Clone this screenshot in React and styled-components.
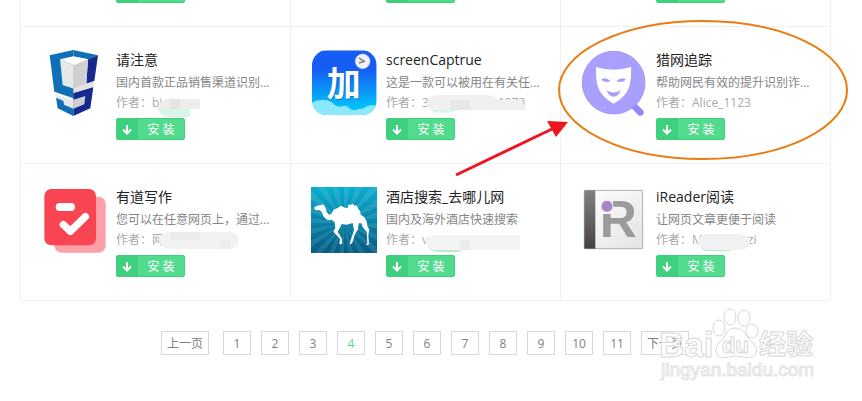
import styled, { createGlobalStyle } from 'styled-components';

const GlobalStyle = createGlobalStyle`
  * {
    box-sizing: border-box;
  }
  body {
    margin: 0;
    background: #fff;
    font-family: 'Open Sans', 'Noto Sans CJK SC', sans-serif;
    font-size: 12px;
  }
`;

const Page = styled.div`
  position: relative;
  overflow: hidden;
  padding: 0 31px 46px 20px;
`;

const Grid = styled.ul`
  display: grid;
  grid-template-columns: repeat(3, 1fr);
  margin: 0;
  padding: 0;
  list-style: none;
  border-left: 1px solid #f0f0f0;
`;

const Card = styled.li`
  display: flex;
  gap: 9px;
  min-width: 0;
  padding: 23px 20px;
  border-right: 1px solid #f0f0f0;
  border-bottom: 1px solid #f0f0f0;
`;

const CardTail = styled(Card)`
  height: 27px;
  padding: 0 20px 23px 95px;
  align-items: flex-end;
`;

const Icon = styled.svg`
  flex: none;
  width: 66px;
  height: 66px;
`;

const Info = styled.div`
  min-width: 0;
`;

const Title = styled.h3`
  margin: 0 0 3px;
  font-size: 14px;
  font-weight: 400;
  line-height: 20px;
  color: #222;
`;

const Line = styled.p`
  position: relative;
  display: flex;
  margin: 0;
  line-height: 20px;
  white-space: nowrap;
  color: ${({ $light }) => ($light ? '#aaa' : '#858585')};
`;

const HiddenPart = styled.span`
  width: ${({ $width }) => $width}px;
`;

const Mask = styled.svg`
  position: absolute;
  left: 0;
  top: -1px;
  width: 140px;
  height: 26px;
`;

const InstallBtn = styled.button`
  display: flex;
  align-items: center;
  flex: none;
  width: 69px;
  height: 22px;
  margin: ${({ $top }) => $top || 0}px 0 0;
  padding: 0;
  border: 1px solid #3fd07f;
  border-radius: 2px;
  background: #52da8d;
  color: #fff;
  font: inherit;
  line-height: 20px;
  cursor: pointer;
`;

const BtnIcon = styled.svg`
  width: 21px;
  height: 20px;
  background: #3fd07f;
`;

const BtnLabel = styled.span`
  flex: 1;
  padding-top: 1px;
  text-align: center;
`;

const Pager = styled.nav`
  display: flex;
  justify-content: center;
  gap: 10px;
  margin-top: 30px;
  padding-right: 1px;
`;

const PageLink = styled.a`
  width: ${({ $wide }) => ($wide ? 48 : 28)}px;
  height: 24px;
  border: 1px solid #d9d9d9;
  line-height: 23px;
  text-align: center;
  text-decoration: none;
  color: ${({ $current }) => ($current ? '#52da8d' : '#808080')};
`;

const PrevLink = styled(PageLink)`
  margin-right: 4px;
`;

const Overlay = styled.svg`
  position: absolute;
  left: ${({ $x }) => $x}px;
  top: ${({ $y }) => $y}px;
  pointer-events: none;
`;

const NoticeIcon = () => (
  <Icon viewBox="123 150 198 198">
    <path d="M220 150 149 166 163 275 220 295Z" fill="#0f70b8" />
    <path d="M220 150 294 166 264 178 220 170Z" fill="#0f70b8" />
    <path d="M294 166 283 243 259 251 264 178Z" fill="#16298c" />
    <path d="M220 279 280 261 271 325 220 348Z" fill="#16298c" />
    <path d="M168 293 190 302 220 325V348L173 325Z" fill="#0f70b8" />
    <path d="M180 178 220 195V266L188 256Z" fill="#e6e8e8" />
    <path d="M264 178 220 195V266L259 252Z" fill="#cfcfd2" />
    <path d="M220 266 283 243 280 261 220 279Z" fill="#e3e3e5" />
    <path d="M188 256 220 266V279L188 270Z" fill="#0f70b8" />
    <path d="M220 169 264 178 220 195 180 178Z" fill="#fff" />
    <path d="M167 284 220 299V326L192 314 190 300 169 292Z" fill="#e6e8e8" />
    <path d="M220 299 256 288 253 313 220 326Z" fill="#cfcfd2" />
  </Icon>
);

const CaptureIcon = () => (
  <Icon viewBox="63 150 198 198">
    <defs>
      <linearGradient id="sky" x1="0" y1="0" x2="0" y2="1">
        <stop offset="0.3" stopColor="#155df4" />
        <stop offset="0.85" stopColor="#04bdfc" />
      </linearGradient>
      <clipPath id="tile">
        <rect x="66" y="151" width="194" height="194" rx="44" />
      </clipPath>
    </defs>
    <g clipPath="url(#tile)">
      <rect x="66" y="151" width="194" height="194" fill="url(#sky)" />
      <path
        d="M66 308Q80 298 100 300Q122 300 133 314Q146 323 156 319Q170 314 181 327Q192 334 204 327Q218 329 228 320Q242 313 262 318V350H66Z"
        fill="#8ce9fd"
      />
    </g>
    <text x="113" y="290" fontSize="102" fontWeight="700" fontFamily="'Noto Sans CJK SC', sans-serif" fill="#064fa8" opacity="0.5">
      加
    </text>
    <text x="110" y="287" fontSize="102" fontWeight="700" fontFamily="'Noto Sans CJK SC', sans-serif" fill="#fff">
      加
    </text>
    <circle cx="218" cy="184" r="22" fill="#f0f1f4" stroke="#c8d4ec" strokeWidth="2" />
    <path d="M207 174 223 184 207 189" fill="none" stroke="#777" strokeWidth="4" />
  </Icon>
);

const MaskIcon = () => (
  <Icon viewBox="93 150 198 198">
    <path d="M252 318 271 337" stroke="#9388fb" strokeWidth="20" strokeLinecap="round" />
    <circle cx="191" cy="248" r="94" fill="#a9a0fe" stroke="#9f94f8" strokeWidth="3" />
    <path
      d="M138 201Q190 217 243 201Q245 238 237 262Q227 292 191 311Q155 292 144 262Q137 238 138 201Z"
      fill="#fff"
    />
    <path
      d="M153 239Q166 229 182 243Q166 250 153 239ZM199 243Q215 229 228 239Q215 250 199 243ZM170 271Q191 284 212 271Q206 290 191 290Q176 290 170 271Z"
      fill="#a9a0fe"
    />
  </Icon>
);

const WritingIcon = () => (
  <Icon viewBox="123 81 198 198">
    <rect x="163" y="110" width="154" height="168" rx="21" fill="#fda0a8" />
    <rect x="133" y="87" width="155" height="169" rx="21" fill="#f94551" />
    <path d="M179 141H213" stroke="#fff" strokeWidth="24" strokeLinecap="round" />
    <path
      d="M190 194 211 214 256 170"
      fill="none"
      stroke="#fff"
      strokeWidth="22"
      strokeLinecap="round"
      strokeLinejoin="round"
    />
  </Icon>
);

const rays = Array.from({ length: 20 }, (_, i) => {
  const point = (deg) => {
    const a = (deg * Math.PI) / 180;
    return `${162 + 200 * Math.cos(a)} ${190 + 200 * Math.sin(a)}`;
  };
  return `M162 190L${point(i * 18)}L${point(i * 18 + 9)}Z`;
}).join('');

const HotelIcon = () => (
  <Icon viewBox="63 81 198 198">
    <defs>
      <linearGradient id="sea" x1="0" y1="0" x2="0" y2="1">
        <stop offset="0" stopColor="#09aed0" />
        <stop offset="1" stopColor="#045b83" />
      </linearGradient>
    </defs>
    <rect x="63" y="81" width="198" height="198" fill="url(#sea)" />
    <path d={rays} fill="#fff" opacity="0.1" />
    <path
      d="M72 143 80 137 94 135 99 133 106 142 110 156 117 164 125 160 131 149 143 144 153 137 164 143 173 144 175 133 181 136 187 131 194 137 200 136 205 147 211 154 211 163 223 172 230 184 232 198 238 209 235 225 237 253 228 256 232 248 230 215 218 202 215 190 206 190 204 208 195 222 187 248 179 254 182 240 192 211 188 189 170 194 155 192 149 205 143 215 155 235 157 251 148 253 150 236 130 215 136 203 134 187 126 180 113 181 101 170 95 155 89 151 76 150Z"
      fill="#fff"
    />
  </Icon>
);

const ReaderIcon = () => (
  <Icon viewBox="63 81 198 198">
    <defs>
      <linearGradient id="spine" x1="0" y1="0" x2="0" y2="1">
        <stop offset="0" stopColor="#808184" />
        <stop offset="1" stopColor="#474244" />
      </linearGradient>
      <linearGradient id="cover" x1="0" y1="0" x2="1" y2="1">
        <stop offset="0" stopColor="#fff" />
        <stop offset="1" stopColor="#e2e3e4" />
      </linearGradient>
    </defs>
    <rect x="73" y="91" width="175" height="175" rx="3" fill="url(#cover)" stroke="#aeb0b2" strokeWidth="3" />
    <rect x="73" y="91" width="33" height="175" fill="url(#spine)" />
    <text x="119" y="231" fontSize="154" fontWeight="700" fontFamily="'Liberation Sans', sans-serif" fill="#9b9b9c">
      R
    </text>
    <rect x="124" y="120" width="35" height="42" fill="#fafafa" />
    <circle cx="141" cy="139" r="18" fill="#a986c8" stroke="#f4f1f7" strokeWidth="3" />
  </Icon>
);

const apps = [
  {
    icon: NoticeIcon,
    title: '请注意',
    desc: '国内首款正品销售渠道识别...',
    author: 'bi',
    hidden: 4,
    tail: 't',
    mask: [
      ['M42 15Q44 7 54 7H84V17H42Z', '#ededed'],
      ['M54 7H64V17H54Z', '#e4e4e5'],
      ['M42 17H74V25H54Q44 25 42 17Z', '#d9f5e5'],
    ],
  },
  {
    icon: CaptureIcon,
    title: 'screenCaptrue',
    desc: '这是一款可以被用在有关任...',
    author: '3',
    hidden: 69,
    tail: '1373',
    mask: [
      ['M42 15H74V18Q60 22 48 20Z', '#d5f4e2'],
      ['M40 13Q42 3 54 3H104L114 8H134L144 18H50Q42 18 40 13Z', '#f0f0f0'],
      ['M64 8H84V18H64Z', '#e8e8e9'],
    ],
  },
  {
    icon: MaskIcon,
    title: '猎网追踪',
    desc: '帮助网民有效的提升识别诈...',
    author: 'Alice_1123',
  },
  {
    icon: WritingIcon,
    title: '有道写作',
    desc: '您可以在任意网页上，通过...',
    author: '网',
    mask: [
      ['M43 11Q44 3 54 3H114Q123 5 123 11Q122 19 114 20H54Q45 19 43 11Z', '#f2f2f3'],
      ['M54 3H84V11H54Z', '#ebebec'],
      ['M104 11H114V20H104Z', '#ececed'],
    ],
  },
  {
    icon: HotelIcon,
    title: '酒店搜索_去哪儿网',
    desc: '国内及海外酒店快速搜索',
    author: 'v',
    mask: [
      ['M42 18H74V23H50Q44 22 42 18Z', '#b9edcf'],
      ['M39 12Q41 6 48 6H134V21H46Q40 18 39 12Z', '#f3f3f4'],
      ['M74 11H84V21H74Z', '#ebebed'],
    ],
  },
  {
    icon: ReaderIcon,
    title: 'iReader阅读',
    desc: '让网页文章更便于阅读',
    author: 'M',
    hidden: 45,
    tail: 'zi',
    mask: [
      ['M44 18H74V22H50Q46 21 44 18Z', '#b4edcc'],
      ['M41 12Q43 5 52 5H84Q94 7 94 14Q93 20 84 21H50Q43 19 41 12Z', '#f1f1f2'],
    ],
  },
];

const pages = [1, 2, 3, 4, 5, 6, 7, 8, 9, 10, 11];

const Install = ({ top }) => (
  <InstallBtn type="button" $top={top}>
    <BtnIcon viewBox="0 0 21 20">
      <path d="M10 6V14M6 10.5 10 14.5 14 10.5" fill="none" stroke="#fff" strokeWidth="2" />
    </BtnIcon>
    <BtnLabel>安 装</BtnLabel>
  </InstallBtn>
);

const AppCard = ({ app }) => {
  const AppIcon = app.icon;
  return (
    <Card>
      <AppIcon />
      <Info>
        <Title>{app.title}</Title>
        <Line>{app.desc}</Line>
        <Line $light>
          作者：{app.author}
          {app.tail && <HiddenPart $width={app.hidden} />}
          {app.tail}
          {app.mask && (
            <Mask viewBox="0 0 140 26">
              {app.mask.map(([d, fill]) => (
                <path key={d} d={d} fill={fill} />
              ))}
            </Mask>
          )}
        </Line>
        <Install top={5} />
      </Info>
    </Card>
  );
};

const Watermark = () => (
  <Overlay
    $x={655}
    $y={305}
    width="170"
    height="80"
    fill="#fff"
    fillOpacity="0.7"
    stroke="#d8d8d8"
    strokeWidth="1"
    fontFamily="'Liberation Sans', 'Noto Sans CJK SC', sans-serif"
  >
    <text x="4" y="52" fontSize="35" fontWeight="700">Bai</text>
    <ellipse cx="64" cy="23" rx="6" ry="8" />
    <ellipse cx="75" cy="12" rx="6" ry="8" />
    <ellipse cx="89" cy="13" rx="6" ry="8" />
    <ellipse cx="97" cy="26" rx="6" ry="7" />
    <path d="M80 23Q87 23 91 30Q94 35 99 39Q104 45 100 50Q96 54 89 52Q80 50 73 52Q66 54 62 50Q59 44 64 38Q69 34 71 29Q74 23 80 23Z" />
    <text x="67" y="48" fontSize="22" fontWeight="700">du</text>
    <text x="104" y="49" fontSize="27" fontWeight="700">经验</text>
    <text x="6" y="71" fontSize="19" stroke="#e2e2e2">jingyan.baidu.com</text>
  </Overlay>
);

export default function App() {
  return (
    <>
      <GlobalStyle />
      <Page>
        <Grid>
          {[0, 1, 2].map((i) => (
            <CardTail key={i}>
              <Install />
            </CardTail>
          ))}
          {apps.map((app) => (
            <AppCard key={app.title} app={app} />
          ))}
        </Grid>
        <Pager>
          <PrevLink href="#prev" $wide>上一页</PrevLink>
          {pages.map((n) => (
            <PageLink key={n} href={`#${n}`} $current={n === 4}>
              {n}
            </PageLink>
          ))}
          <PageLink href="#next" $wide>下一页</PageLink>
        </Pager>
        <Overlay $x={557} $y={19} width="292" height="142">
          <ellipse cx="146" cy="71" rx="144" ry="69" fill="none" stroke="#e87d12" strokeWidth="2" />
        </Overlay>
        <Overlay $x={454} $y={119} width="116" height="58">
          <path d="M2 56 98 10" stroke="#ec1520" strokeWidth="3" />
          <path d="M114 3 93 2 102 18Z" fill="#ec1520" />
        </Overlay>
        <Watermark />
      </Page>
    </>
  );
}
